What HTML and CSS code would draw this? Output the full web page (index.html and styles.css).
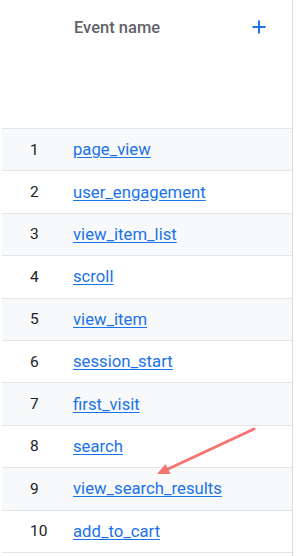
FILE: index.html
```html
<!DOCTYPE html>
<html>
<head>
<meta charset="utf-8">
<link rel="stylesheet" href="styles.css">
</head>
<body>
<div class="table">
  <div class="head">
    <span class="hname">Event name</span>
    <svg class="plus" width="14" height="14" viewBox="0 0 14 14"><path d="M7 0.5V13.5M0.5 7H13.5" stroke="#1a73e8" stroke-width="2"/></svg>
  </div>
  <div class="rows">
    <div class="row odd"><span class="num">1</span><a class="link" href="#">page_view</a></div>
    <div class="row"><span class="num">2</span><a class="link" href="#">user_engagement</a></div>
    <div class="row odd"><span class="num">3</span><a class="link" href="#">view_item_list</a></div>
    <div class="row"><span class="num">4</span><a class="link" href="#">scroll</a></div>
    <div class="row odd"><span class="num">5</span><a class="link" href="#">view_item</a></div>
    <div class="row"><span class="num">6</span><a class="link" href="#">session_start</a></div>
    <div class="row odd"><span class="num">7</span><a class="link" href="#">first_visit</a></div>
    <div class="row"><span class="num">8</span><a class="link" href="#">search</a></div>
    <div class="row odd"><span class="num">9</span><a class="link" href="#">view_search_results</a></div>
    <div class="row"><span class="num">10</span><a class="link" href="#">add_to_cart</a></div>
  </div>
</div>
<svg class="arrow" width="110" height="60" viewBox="0 0 110 60">
  <line x1="104" y1="9" x2="17" y2="49.5" stroke="#f47470" stroke-width="3" stroke-linecap="round"/>
  <polygon points="7,54 15.5,44 20.5,54" fill="#f47470"/>
</svg>
</body>
</html>
```
FILE: styles.css
```css
html, body {
  margin: 0;
  padding: 0;
  background: #ffffff;
  font-family: Roboto, "Liberation Sans", Arial, sans-serif;
}
body {
  position: relative;
  width: 300px;
  height: 556px;
  overflow: hidden;
}
.table {
  margin-left: 2px;
  width: 291px;
  height: 556px;
  box-sizing: border-box;
  border-right: 1px solid #dadce0;
}
.head {
  height: 128px;
  display: flex;
  align-items: flex-start;
  padding: 17px 0 0 72px;
  box-sizing: border-box;
}
.hname {
  font-size: 16.5px;
  font-weight: 500;
  color: #5f6368;
  line-height: 22px;
  flex: 1;
}
.plus {
  margin: 3px 26px 0 0;
}
.rows {
  border-top: 1px solid #e3e4e6;
}
.row {
  height: 42.4px;
  box-sizing: border-box;
  border-bottom: 1px solid #e3e4e6;
  display: flex;
  align-items: center;
  padding-left: 28px;
}
.row.odd {
  background: #f8f9fa;
}
.num {
  width: 43px;
  font-size: 15.5px;
  color: #202124;
}
.link {
  font-size: 16.7px;
  color: #1a73e8;
  text-decoration: underline;
  text-underline-offset: 2px;
}
.arrow {
  position: absolute;
  left: 150px;
  top: 420px;
}
```
